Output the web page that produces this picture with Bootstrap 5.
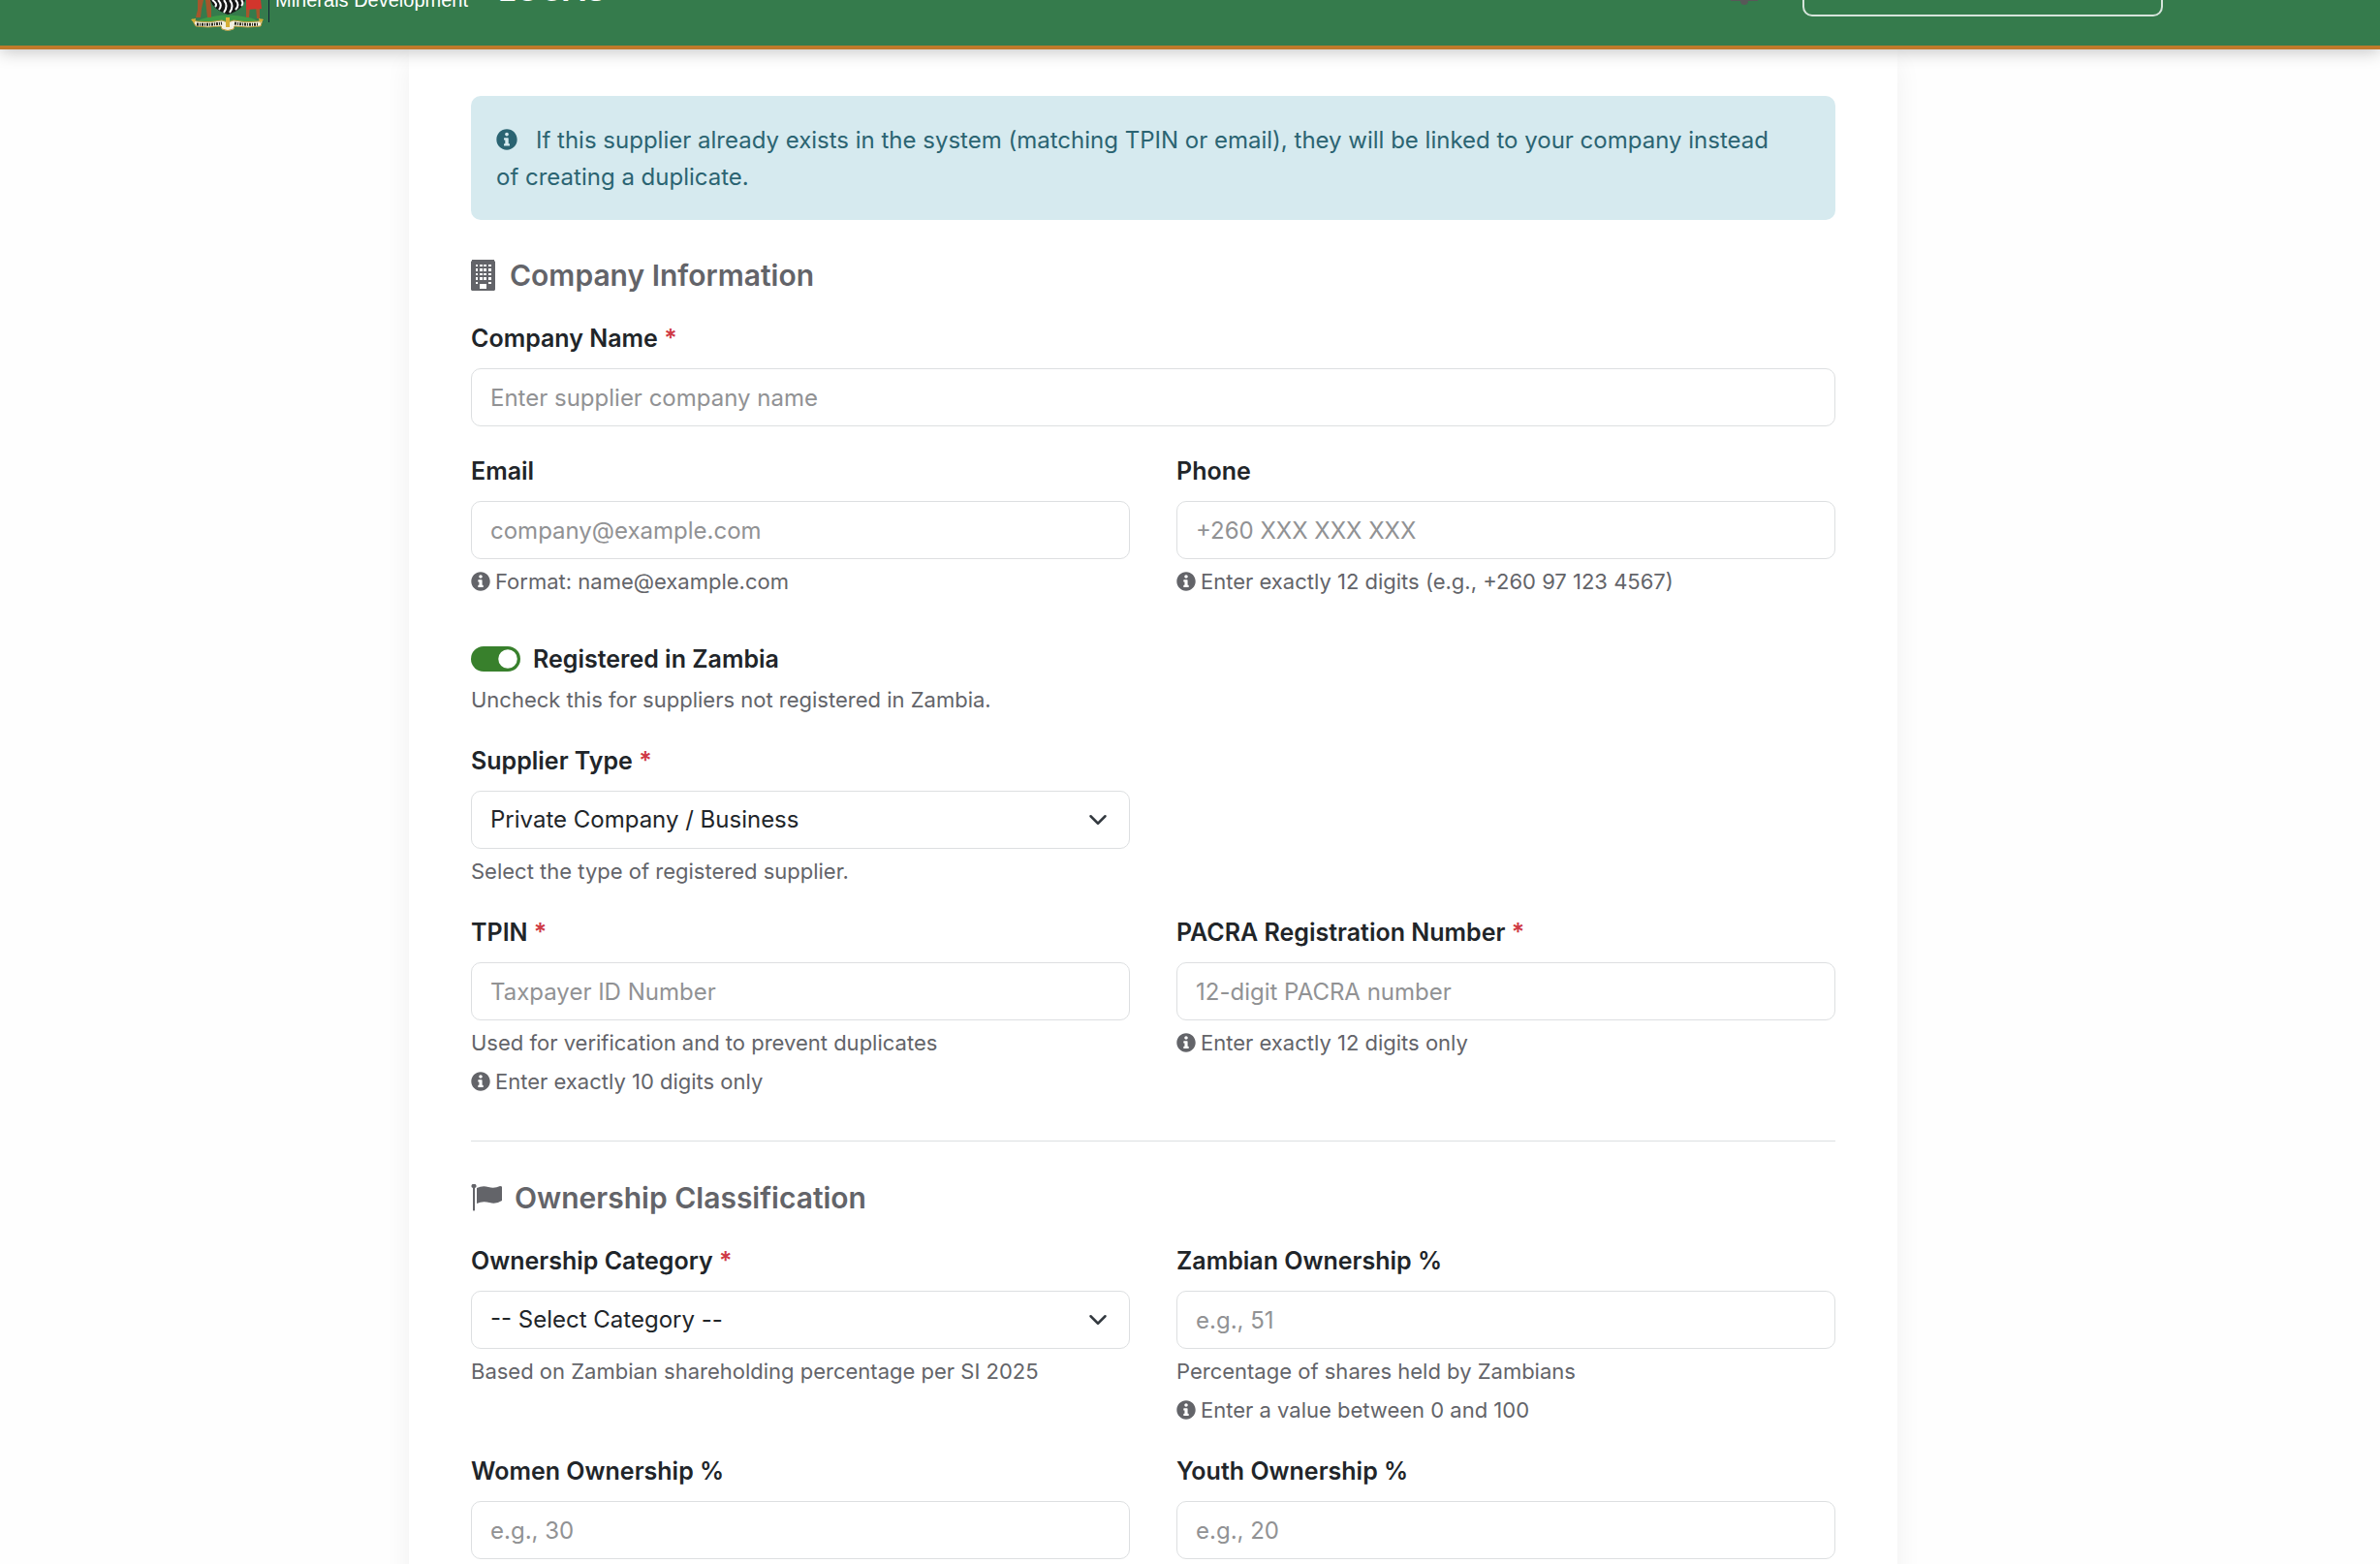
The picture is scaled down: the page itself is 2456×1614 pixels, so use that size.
<!DOCTYPE html>
<html lang="en">
<head>
<meta charset="utf-8">
<meta name="viewport" content="width=device-width, initial-scale=1">
<title>Add Supplier</title>
<link href="https://cdn.jsdelivr.net/npm/bootstrap@5.3.0/dist/css/bootstrap.min.css" rel="stylesheet">
<style>
  body { font-family: Inter, "Liberation Sans", sans-serif; font-size: 24px; line-height: 38px; color: #212529; background: #fefefe; }
  .topbar { height: 51px; background: #357b4c; border-bottom: 4px solid #c07a2b; box-shadow: 0 3px 16px rgba(0,0,0,.22); z-index: 10; padding: 0 224px 0 197px; }
  .crest { width: 76px; height: 32px; }
  .crest-rule { width: 1px; height: 23px; background: #123; margin-left: 4px; }
  .ministry { font: 20px/24px "Liberation Sans", Arial, sans-serif; color: #fff; margin: -12px 0 0 6px; }
  .brand { font-size: 33px; line-height: 38px; font-weight: 600; color: #fff; margin: -30px 0 0 31px; text-decoration: none; }
  .bell { width: 28px; height: 6px; }
  .user-btn { width: 372px; height: 60px; margin: -43px 0 0 46px; border: 2px solid rgba(255,255,255,.8); border-radius: 10px; }
  .page-wrap { padding-right: 76px; }
  .form-card { max-width: 1536px; padding: 48px 64px 64px; background: #fff; box-shadow: 0 13px 26px rgba(0,0,0,.06); }
  .note { background: #d6eaef; color: #2b6472; border-radius: 10px; padding: 27px 40px 25px 26px; margin-bottom: 38px; }
  .note svg { width: 22px; height: 22px; margin-right: 19px; vertical-align: -2px; }
  .section-title { font-size: 30px; line-height: 38px; font-weight: 600; color: #636469; margin-bottom: 26px; }
  .section-title svg { margin-right: 15px; }
  .section-title .flag { margin-right: 13px; }
  .field { margin-bottom: 26px; }
  .form-label { font-size: 25px; font-weight: 600; padding-top: 1px; margin-bottom: 12px; display: block; }
  .form-label span { color: #cf3a45; }
  .form-control, .form-select { font-size: 24px; line-height: 38px; height: 60px; padding: 10px 19px; border-color: #dddfe1; border-radius: 10px; color: #212529; background-color: #fff; }
  .form-control::placeholder { color: #919294; }
  .form-select { padding-right: 60px; background-position: right 19px center; background-size: 26px 20px; }
  .form-text { font-size: 22px; line-height: 34px; margin-top: 6px; color: #636469; }
  .form-text svg { width: 20px; height: 20px; margin-right: 5px; vertical-align: -2px; }
  .pair { --bs-gutter-x: 48px; }
  .contact { margin-bottom: 17px; }
  .form-switch { padding: 0; min-height: 38px; margin: 0; gap: 13px; }
  .form-switch .form-check-input { width: 51px; height: 26px; margin: 0; float: none; border: 0; }
  .form-switch .form-check-input:checked { background-color: #38802c; }
  .form-switch label { font-size: 25px; font-weight: 600; padding-top: 1px; }
  .split { border-top: 1px solid #dddfe1; opacity: 1; margin: 44px 0 39px; }
</style>
</head>
<body class="vh-100 overflow-hidden">
<svg class="d-none" xmlns="http://www.w3.org/2000/svg">
  <symbol id="i-info" viewBox="0 0 512 512"><path fill="currentColor" d="M256 8C119 8 8 119 8 256s111 248 248 248 248-111 248-248S393 8 256 8zm0 78c25 0 44 19 44 44s-19 44-44 44-44-19-44-44 19-44 44-44zm70 310c0 8-6 14-14 14H200c-8 0-14-6-14-14v-28c0-8 6-14 14-14h16v-84h-16c-8 0-14-6-14-14v-28c0-8 6-14 14-14h82c8 0 14 6 14 14v126h16c8 0 14 6 14 14v28z"/></symbol>
</svg>

<header class="topbar d-flex align-items-start position-relative">
  <svg class="crest" viewBox="0 0 76 32" aria-hidden="true">
    <path fill="#3e9a45" d="M10 20q28-9 56 0l3 3H7z"/>
    <path fill="#151515" d="M20 0h36q-2 10-18 15Q23 10 20 0z"/>
    <path fill="none" stroke="#fff" stroke-width="2" d="M22 0q6 4 3 7M28 0q5 5 1 10M34 0q5 6 0 13M40 0q5 6 0 13M46 0q5 5 0 10M52 0q3 3 0 6"/>
    <path fill="#a5562b" d="M7 0h6l-2 9-1 9H5l2-8zM15 0h5l1 9v9h-4zM57 6h4l-1 12h-3zM67 6h4v13h-3z"/>
    <path fill="#d2352c" d="M57 0h15l1 9-16 1z"/>
    <path fill="#f2efe0" stroke="#b89a3c" stroke-width="1" d="M1 20l5 2q13 2 26-1l6 2 6-2q13 3 26 1l4-2-2 7q-13 2-27 0l-1 3q-6 3-12 0l-1-3q-14 2-26 0z"/>
    <path fill="none" stroke="#2a2a20" stroke-width="3" stroke-dasharray="2 1 1 1" d="M6 25q13 1 26-1M45 24q13 2 25 1"/>
    <path fill="#d5ae35" d="M36 18h4v10h-4zM0 20l5-1-1 5zM75 20l-5-1 1 5z"/>
  </svg>
  <div class="crest-rule"></div>
  <div class="ministry">Minerals Development</div>
  <a class="brand" href="#">LOCAS</a>
  <svg class="bell ms-auto" viewBox="0 0 28 6" aria-hidden="true"><path fill="#585858" d="M0 0h28v1H18q0 4-4 4t-4-4H0z"/></svg>
  <button class="btn user-btn" type="button" aria-label="Account"></button>
</header>

<main class="page-wrap">
  <form class="form-card mx-auto">
    <div class="note">
      <svg aria-hidden="true"><use href="#i-info"/></svg>If this supplier already exists in the system (matching TPIN or email), they will be linked to your company instead of creating a duplicate.
    </div>

    <h2 class="section-title d-flex align-items-center">
      <svg width="25" height="32" viewBox="0 0 25 32" aria-hidden="true"><path fill="currentColor" fill-rule="evenodd" d="M1 0h23v1l1 1v29l-1 1H1l-1-1V2l1-1zM5 5v2h2V5zm4 0v2h3V5zm4 0v2h3V5zm5 0v2h3V5zM5 9v3h2V9zm4 0v3h3V9zm4 0v3h3V9zm5 0v3h3V9zM5 14v2h2v-2zm4 0v2h3v-2zm4 0v2h3v-2zm5 0v2h3v-2zM5 18v3h2v-3zm4 0v3h3v-3zm4 0v3h3v-3zm5 0v3h3v-3zM5 23v2h2v-2zm13 0v2h3v-2zM9 25v5h7v-5z"/></svg>Company Information
    </h2>

    <div class="field">
      <label class="form-label" for="name">Company Name <span>*</span></label>
      <input class="form-control" id="name" type="text" placeholder="Enter supplier company name">
    </div>

    <div class="row pair contact">
      <div class="col-6 field">
        <label class="form-label" for="email">Email</label>
        <input class="form-control" id="email" type="email" placeholder="company@example.com">
        <div class="form-text"><svg aria-hidden="true"><use href="#i-info"/></svg>Format: name@example.com</div>
      </div>
      <div class="col-6 field">
        <label class="form-label" for="phone">Phone</label>
        <input class="form-control" id="phone" type="tel" placeholder="+260 XXX XXX XXX">
        <div class="form-text"><svg aria-hidden="true"><use href="#i-info"/></svg>Enter exactly 12 digits (e.g., +260 97 123 4567)</div>
      </div>
    </div>

    <div class="field">
      <div class="form-check form-switch d-flex align-items-center">
        <input class="form-check-input" id="registered" type="checkbox" role="switch" checked>
        <label class="form-check-label" for="registered">Registered in Zambia</label>
      </div>
      <div class="form-text">Uncheck this for suppliers not registered in Zambia.</div>
    </div>

    <div class="row pair">
      <div class="col-6 field">
        <label class="form-label" for="type">Supplier Type <span>*</span></label>
        <select class="form-select" id="type"><option>Private Company / Business</option></select>
        <div class="form-text">Select the type of registered supplier.</div>
      </div>
    </div>

    <div class="row pair">
      <div class="col-6">
        <label class="form-label" for="tpin">TPIN <span>*</span></label>
        <input class="form-control" id="tpin" type="text" placeholder="Taxpayer ID Number">
        <div class="form-text">Used for verification and to prevent duplicates</div>
        <div class="form-text"><svg aria-hidden="true"><use href="#i-info"/></svg>Enter exactly 10 digits only</div>
      </div>
      <div class="col-6">
        <label class="form-label" for="pacra">PACRA Registration Number <span>*</span></label>
        <input class="form-control" id="pacra" type="text" placeholder="12-digit PACRA number">
        <div class="form-text"><svg aria-hidden="true"><use href="#i-info"/></svg>Enter exactly 12 digits only</div>
      </div>
    </div>

    <hr class="split">

    <h2 class="section-title d-flex align-items-center">
      <svg class="flag" width="32" height="28" viewBox="0 0 32 28" aria-hidden="true"><path fill="currentColor" d="M3 0a2 2 0 0 1 1 4v23q-1 1-2 0V4A2 2 0 0 1 3 0zM6 4q6-3 12-1t12-1q2 0 2 1v14q-6 4-13 2T6 20z"/></svg>Ownership Classification
    </h2>

    <div class="row pair">
      <div class="col-6 field">
        <label class="form-label" for="category">Ownership Category <span>*</span></label>
        <select class="form-select" id="category"><option>-- Select Category --</option></select>
        <div class="form-text">Based on Zambian shareholding percentage per SI 2025</div>
      </div>
      <div class="col-6 field">
        <label class="form-label" for="zambian">Zambian Ownership %</label>
        <input class="form-control" id="zambian" type="text" placeholder="e.g., 51">
        <div class="form-text">Percentage of shares held by Zambians</div>
        <div class="form-text"><svg aria-hidden="true"><use href="#i-info"/></svg>Enter a value between 0 and 100</div>
      </div>
      <div class="col-6 field">
        <label class="form-label" for="women">Women Ownership %</label>
        <input class="form-control" id="women" type="text" placeholder="e.g., 30">
      </div>
      <div class="col-6 field">
        <label class="form-label" for="youth">Youth Ownership %</label>
        <input class="form-control" id="youth" type="text" placeholder="e.g., 20">
      </div>
    </div>
  </form>
</main>
<script src="https://cdn.jsdelivr.net/npm/bootstrap@5.3.0/dist/js/bootstrap.bundle.min.js"></script>
</body>
</html>
